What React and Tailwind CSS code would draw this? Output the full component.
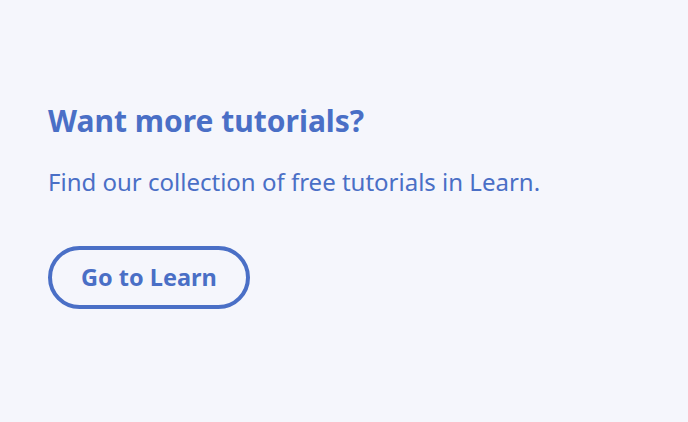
export default function App() {
  return (
    <div className="w-[688px] h-[422px] bg-[#f5f6fc] flex flex-col pt-[103px] px-[48px] text-[#4a6fc6]" style={{ fontFamily: '"Noto Sans", "Open Sans", sans-serif' }}>
      <h2 className="text-[30px] font-bold leading-[36px]">Want more tutorials?</h2>
      <p className="mt-[28px] text-[24px] leading-[30px]">Find our collection of free tutorials in Learn.</p>
      <div className="mt-[49px]">
        <button className="h-[63px] px-[29px] rounded-full border-4 border-[#4a6fc6] text-[23.5px] font-bold leading-none">Go to Learn</button>
      </div>
    </div>
  );
}
